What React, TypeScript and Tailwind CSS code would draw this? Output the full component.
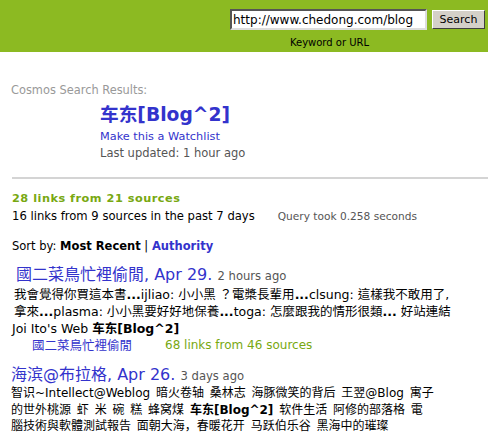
import React from "react";

const F = { fontFamily: '"DejaVu Sans", "Noto Sans CJK TC", sans-serif' };
const FSC = { fontFamily: '"DejaVu Sans", "Noto Sans CJK SC", sans-serif' };

export default function App() {
  return (
    <div className="w-[488px] h-[434px] overflow-hidden bg-white text-black" style={F}>
      <div className="h-[52px] bg-[#8cba22] flex justify-end pr-[3px]">
        <div className="flex flex-col items-center pt-[9px]">
          <div className="flex items-center gap-[5px]">
            <input
              readOnly
              value="http://www.chedong.com/blog"
              className="w-[197px] h-[21px] bg-white border-2 border-t-[#555] border-l-[#555] border-b-[#ddd] border-r-[#ddd] px-[1px] text-[12px] text-black outline-none"
              style={F}
            />
            <button
              className="w-[53px] h-[19px] bg-[#d4d0c8] border border-t-white border-l-white border-b-[#404040] border-r-[#404040] text-[11px] leading-none text-black"
              style={F}
            >
              Search
            </button>
          </div>
          <div className="text-[10px] leading-none mt-[8px] pr-[56px]">Keyword or URL</div>
        </div>
      </div>

      <div className="pl-[11px]">
        <div className="mt-[32px] text-[11.4px] leading-[13px] text-[#999]">Cosmos Search Results:</div>
        <div className="pl-[89px] mt-[7px]">
          <div className="text-[18.7px] leading-[22px] font-bold text-[#3333cc]" style={FSC}>车东[Blog^2]</div>
          <div className="text-[11.3px] leading-[15px] mt-[3px] text-[#3333cc]">Make this a Watchlist</div>
          <div className="text-[11.5px] leading-[15px] mt-[2px] text-[#555]">Last updated: 1 hour ago</div>
        </div>
        <div className="mt-[16px] h-[2px] bg-[#d4d4d4] ml-[1px]" />
        <div className="mt-[13px] text-[11.3px] leading-[14px] font-bold text-[#78a811] tracking-[0.5px] pl-[1px]">28 links from 21 sources</div>
        <div className="flex items-center text-[11.6px] leading-[16px] mt-[2px] pl-[1px]">
          <span>16 links from 9 sources in the past 7 days</span>
          <span className="ml-[23px] text-[10.6px] text-[#555]">Query took 0.258 seconds</span>
        </div>
        <div className="mt-[15px] text-[11.5px] leading-[14px] pl-[1px]">
          Sort by: <b>Most Recent</b> | <b className="text-[#3333cc]">Authority</b>
        </div>

        <div className="mt-[12px] leading-[19px] pl-[5px]">
          <span className="text-[16px] text-[#3333cc]">國二菜鳥忙裡偷閒, Apr 29.</span>{" "}
          <span className="text-[11.6px] text-[#555]">2 hours ago</span>
        </div>
        <div className="text-[12.5px] leading-[17px] pl-[3px] pr-[4px]">
          我會覺得你買這本書<b>...</b>ijliao: 小小黑 ？電槳長輩用<b>...</b>clsung: 這樣我不敢用了,<br />
          拿來<b>...</b>plasma: 小小黑要好好地保養<b>...</b>toga: 怎麼跟我的情形很類<b>...</b> 好站連結
        </div>
        <div className="text-[12.5px] leading-[17px] pl-[1px]">
          Joi Ito's Web <b style={FSC}>车东[Blog^2]</b>
        </div>
        <div className="text-[12px] leading-[17px] pl-[21px] flex">
          <span className="text-[#3333cc] w-[133px] text-[12.5px]">國二菜鳥忙裡偷閒</span>
          <span className="text-[#78a811]">68 links from 46 sources</span>
        </div>

        <div className="mt-[12px] leading-[18px]">
          <span className="text-[16px] text-[#3333cc]" style={FSC}>海滨@布拉格, Apr 26.</span>{" "}
          <span className="text-[11.6px] text-[#555]">3 days ago</span>
        </div>
        <div className="text-[12px] leading-[16.5px] pr-[4px] [word-spacing:2px]" style={FSC}>
          智识~Intellect@Weblog 暗火卷轴 桑林志 海豚微笑的背后 王翌@Blog 寓子<br />
          的世外桃源 虾 米 碗 糕 蜂窝煤 <b>车东[Blog^2]</b> 软件生活 阿修的部落格 電<br />
          腦技術與軟體測試報告 面朝大海，春暖花开 马跃伯乐谷 黑海中的璀璨
        </div>
      </div>
    </div>
  );
}
